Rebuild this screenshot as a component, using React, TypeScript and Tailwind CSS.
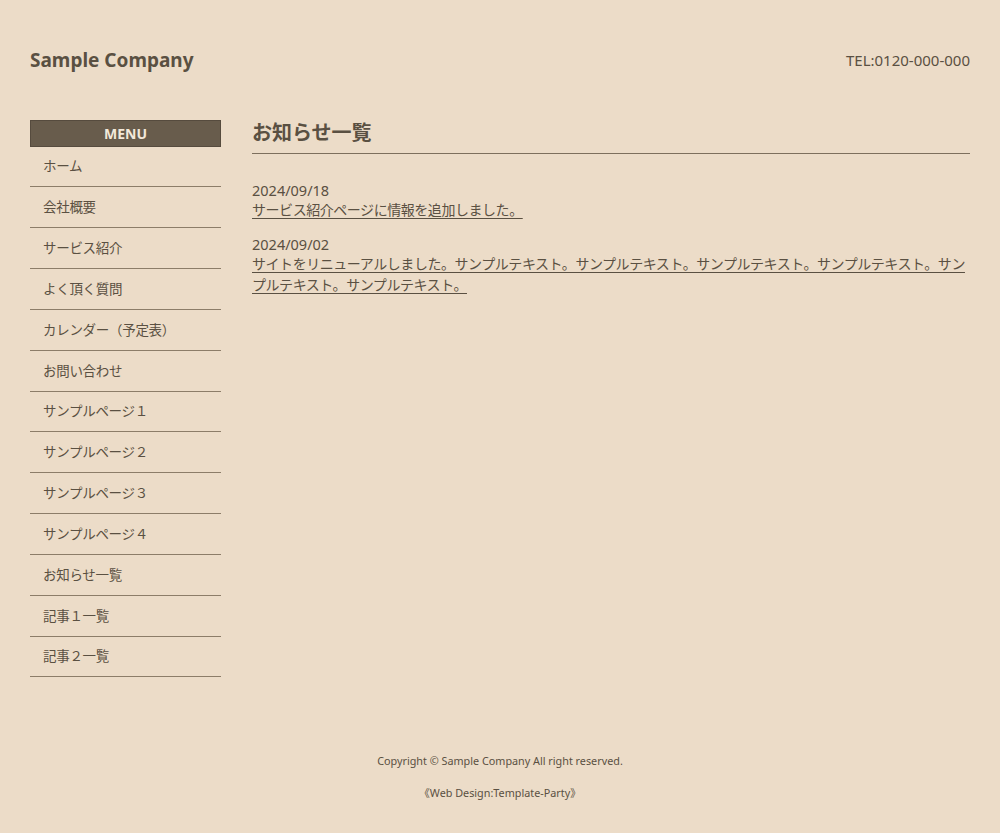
import React from 'react';

const menuItems = [
  'ホーム',
  '会社概要',
  'サービス紹介',
  'よく頂く質問',
  'カレンダー（予定表）',
  'お問い合わせ',
  'サンプルページ１',
  'サンプルページ２',
  'サンプルページ３',
  'サンプルページ４',
  'お知らせ一覧',
  '記事１一覧',
  '記事２一覧',
];

const news = [
  { date: '2024/09/18', text: 'サービス紹介ページに情報を追加しました。' },
  {
    date: '2024/09/02',
    text: 'サイトをリニューアルしました。サンプルテキスト。サンプルテキスト。サンプルテキスト。サンプルテキスト。サンプルテキスト。サンプルテキスト。',
  },
];

const App = () => {
  return (
    <div className="min-h-screen bg-[#ecdcc8] text-[#5a5042] font-['Noto_Sans','Noto_Sans_CJK_JP',sans-serif]">
      <header className="h-[120px] px-[30px] flex items-center justify-between">
        <h1 className="text-[19px] font-bold text-[#5a5042] pt-[1px]">Sample Company</h1>
        <div className="text-[15px]">TEL:0120-000-000</div>
      </header>

      <div className="px-[30px] flex gap-[31px]">
        {/* sidebar */}
        <nav className="w-[191px] shrink-0">
          <div className="h-[26.5px] bg-[#685c4c] border border-[#564b3e] flex items-center justify-center text-[14px] font-bold text-[#f3e8da]">
            MENU
          </div>
          <ul>
            {menuItems.map((item) => (
              <li
                key={item}
                className="h-[40.85px] flex items-center pl-[13px] text-[13.5px] tracking-[-0.3px] border-b border-[#8c7d69]"
              >
                {item}
              </li>
            ))}
          </ul>
        </nav>

        {/* main */}
        <main className="flex-1">
          <h2 className="text-[20px] font-bold pb-[7px] border-b border-[#7d6f5d] leading-[26px]">
            お知らせ一覧
          </h2>
          <dl className="mt-[26px] space-y-[14px] leading-[21px]">
            {news.map((n) => (
              <div key={n.date}>
                <dt className="text-[14.5px]">{n.date}</dt>
                <dd className="-mt-[2px] text-[14px] tracking-[-0.45px]">
                  <a href="#" className="underline underline-offset-[3px] text-[#5a5042]">
                    {n.text}
                  </a>
                </dd>
              </div>
            ))}
          </dl>
        </main>
      </div>

      <footer className="pt-[76px] pb-[25px] text-center text-[10.8px]">
        <p>Copyright © Sample Company All right reserved.</p>
        <p className="mt-[15px]">《Web Design:Template-Party》</p>
      </footer>
    </div>
  );
};

export default App;
